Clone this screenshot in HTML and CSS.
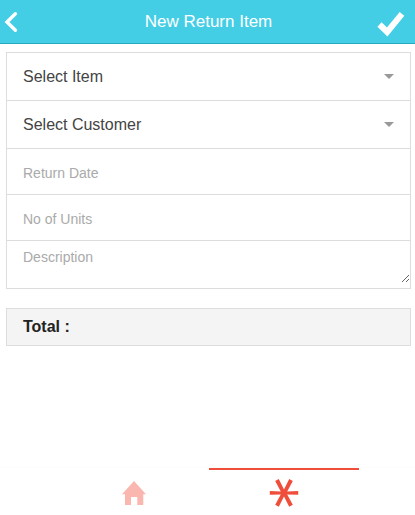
FILE: index.html
```html
<!DOCTYPE html>
<html lang="en">
<head>
<meta charset="utf-8">
<title>New Return Item</title>
<link rel="stylesheet" href="styles.css">
</head>
<body>
<header class="bar">
  <svg class="back" width="14" height="22" viewBox="0 0 14 22"><path d="M11.4 2.7 3 11 11.4 19.3"/></svg>
  <h1 class="title">New Return Item</h1>
  <svg class="check" width="28" height="26" viewBox="0 0 28 26"><path d="M2.5 13.5 10.2 21 25 2.8"/></svg>
</header>
<main class="content">
  <div class="list">
    <div class="item select"><span>Select Item</span><i class="caret"></i></div>
    <div class="item select"><span>Select Customer</span><i class="caret"></i></div>
    <input class="item field" type="text" placeholder="Return Date">
    <input class="item field" type="text" placeholder="No of Units">
    <div class="item note"><textarea placeholder="Description"></textarea></div>
  </div>
  <div class="total">Total :</div>
</main>
<footer class="tabs">
  <a class="tab inactive"><svg width="24" height="24" viewBox="0 0 24 24"><path d="M12 0 24 13.3H21.3V24H15.3V16H9V24H3V13.3H0Z"/></svg></a>
  <a class="tab active"><svg width="30" height="28" viewBox="0 0 30 28"><path d="M.8 12 11.8 12.4 6.2 2.1 9.8 0 15 10.4 20.2 0 23.8 2.1 18.2 12.4 29.2 12V15.8L18.2 15.4 23.8 25.7 20.2 27.8 15 17.4 9.8 27.8 6.2 25.7 11.8 15.4 .8 15.8Z"/></svg></a>
</footer>
</body>
</html>
```
FILE: styles.css
```css
* {
  box-sizing: border-box;
}

body {
  margin: 0;
  height: 515px;
  display: flex;
  flex-direction: column;
  overflow: hidden;
  background: #fff;
  font-family: "Liberation Sans", Arial, sans-serif;
  font-size: 16px;
  color: #444;
}

.bar {
  height: 44px;
  flex: none;
  display: flex;
  align-items: center;
  justify-content: space-between;
  padding: 0 10px 0 4px;
  background: #43cee6;
  border-bottom: 1px solid #28a9c0;
}

.bar path {
  fill: none;
  stroke: #fff;
}

.back path {
  stroke-width: 3.4;
  stroke-linecap: round;
}

.check {
  margin-top: 4px;
}

.check path {
  stroke-width: 6;
}

.title {
  margin: 0 0 0 22px;
  font-size: 17px;
  font-weight: 400;
  line-height: 43px;
  color: #fff;
}

.content {
  flex: 1;
  padding: 8px 4px 0 6px;
}

.list {
  border: 1px solid #ddd;
}

.item {
  display: flex;
  width: 100%;
  border: 0;
  border-bottom: 1px solid #ddd;
  padding: 0 16px;
  background: #fff;
}

.item:last-child {
  border-bottom: 0;
}

.select {
  height: 48px;
  align-items: center;
  justify-content: space-between;
}

.caret {
  border: 5px solid transparent;
  border-top-color: #999;
  border-bottom: 0;
}

.field {
  height: 46px;
  padding-top: 3px;
  font: 14px "Liberation Sans", Arial, sans-serif;
}

.note {
  height: 47px;
  padding: 0;
}

textarea {
  display: block;
  width: 100%;
  height: 42px;
  border: 0;
  margin: 0;
  padding: 8px 16px 0;
  background: transparent;
  font: 14px/17px "Liberation Sans", Arial, sans-serif;
  resize: vertical;
  outline: 0;
}

::placeholder {
  color: #aaa;
}

.total {
  margin-top: 19px;
  height: 38px;
  padding-left: 16px;
  border: 1px solid #ddd;
  background: #f4f4f4;
  font-weight: 700;
  line-height: 36px;
  color: #222;
}

.tabs {
  height: 48px;
  flex: none;
  display: flex;
  padding-left: 59px;
  border-top: 1px solid #fcfcfc;
}

.tab {
  width: 150px;
  display: flex;
  justify-content: center;
  padding: 13px 1px 0 0;
}

.inactive {
  fill: #fab7af;
}

.active {
  padding-top: 9px;
  border-top: 2px solid #ef4e3a;
  fill: #ef4e3a;
}
```
